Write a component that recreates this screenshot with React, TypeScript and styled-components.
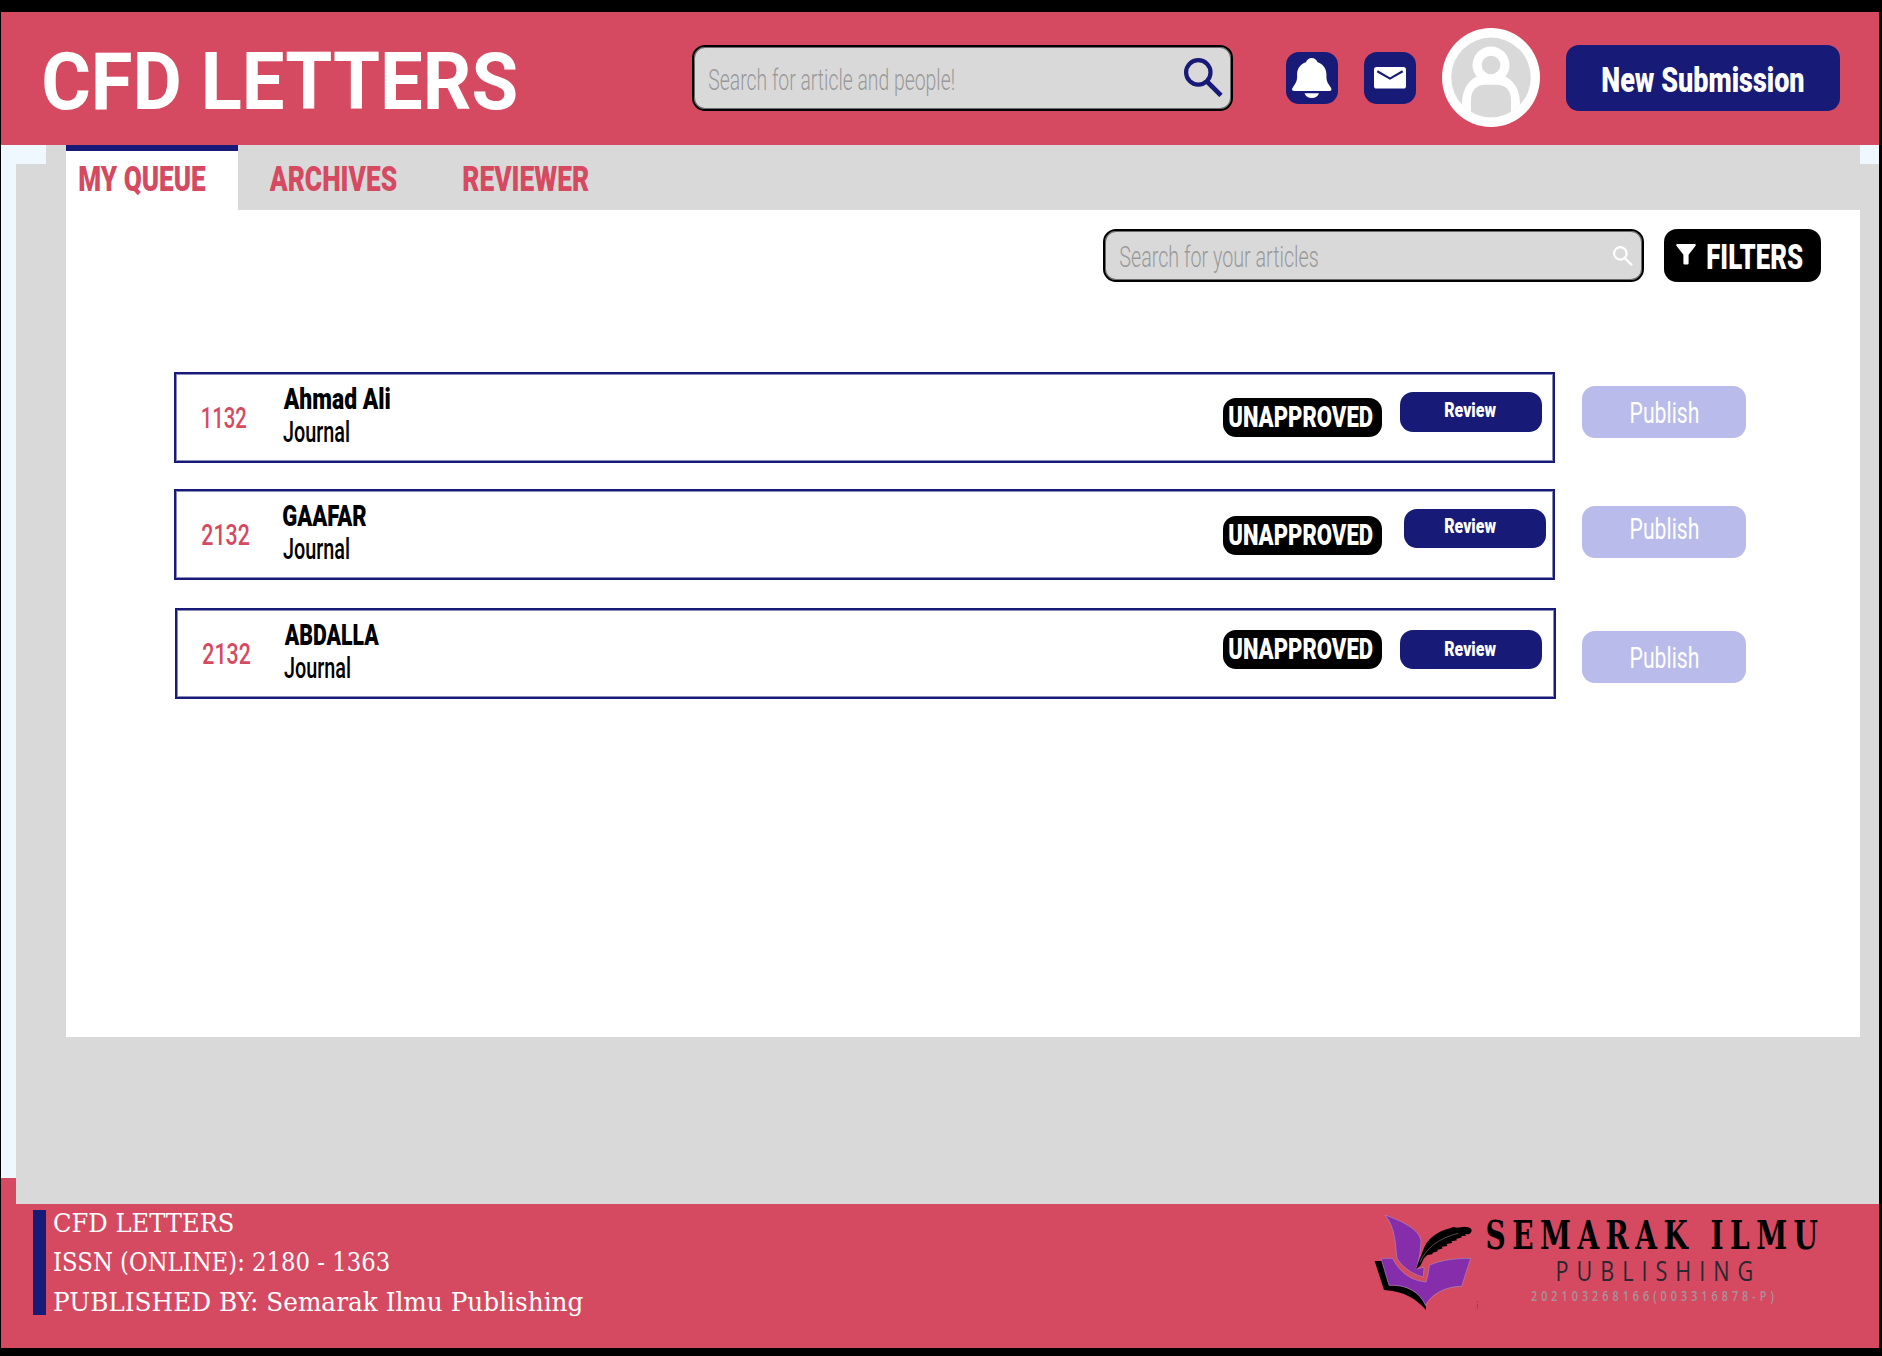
import React, { useLayoutEffect, useState } from "react";
import styled, { createGlobalStyle } from "styled-components";

const pink = "#d54a61";
const navy = "#171a76";
const grey = "#d9d9d9";
const ice = "#f0f8ff";
const lilac = "#b9bbea";
const sans = `Roboto, "Open Sans", "Liberation Sans", sans-serif`;
const slab = `"DejaVu Serif", "Liberation Serif", serif`;
const humanist = `"Open Sans", "Noto Sans", sans-serif`;

const GlobalStyle = createGlobalStyle`
  *, *::before, *::after { box-sizing: border-box; }
  body { margin: 0; background: #000; font-family: ${sans}; }
`;

/* ---------- condensed text ---------- */

type LabelProps = {
  $size: number;
  $weight?: number;
  $color?: string;
  $family?: string;
  $line?: number;
  $spacing?: number;
};

const LabelBox = styled.span<LabelProps & { $width: number }>`
  display: block;
  flex: none;
  width: ${(p) => p.$width}px;
  height: ${(p) => p.$line ?? p.$size}px;
  line-height: ${(p) => p.$line ?? p.$size}px;
  font-family: ${(p) => p.$family ?? sans};
  font-size: ${(p) => p.$size}px;
  font-weight: ${(p) => p.$weight ?? 400};
  letter-spacing: ${(p) => p.$spacing ?? 0}px;
  color: ${(p) => p.$color ?? "#000"};
  white-space: pre;
`;

const LabelInk = styled.span`
  display: inline-block;
  transform-origin: 0 50%;
`;

type FitProps = {
  children: string;
  width: number;
  size: number;
  weight?: number;
  color?: string;
  family?: string;
  line?: number;
  spacing?: number;
  lift?: number;
};

/* Squeezes a label horizontally so that its glyphs span exactly `width`. */
function Fit({ children, width, size, weight = 400, color, family = sans, line, spacing = 0, lift = 0 }: FitProps) {
  const [transform, setTransform] = useState("none");
  useLayoutEffect(() => {
    const ctx = document.createElement("canvas").getContext("2d");
    if (!ctx) return;
    ctx.font = `${weight} ${size}px ${family}`;
    (ctx as any).letterSpacing = `${spacing}px`;
    const m = ctx.measureText(children);
    const scale = width / (m.actualBoundingBoxRight + m.actualBoundingBoxLeft);
    setTransform(`translate(${m.actualBoundingBoxLeft * scale}px, ${-lift}px) scaleX(${scale})`);
  }, [children, width, size, weight, family, spacing, lift]);
  return (
    <LabelBox $width={width} $size={size} $weight={weight} $color={color} $family={family} $line={line} $spacing={spacing}>
      <LabelInk style={{ transform }}>{children}</LabelInk>
    </LabelBox>
  );
}

/* ---------- page frame ---------- */

const Page = styled.div`
  width: 1882px;
  height: 1356px;
  padding: 12px 3px 8px 1px;
  background: #000;
  display: flex;
  flex-direction: column;
  overflow: hidden;
`;

const Header = styled.header`
  flex: none;
  height: 133px;
  padding: 0 39px 2px 43px;
  background: ${pink};
  display: flex;
  align-items: center;
`;

const Brand = styled.h1`
  margin: 8px 176px 0 0;
  font: inherit;
`;

const SearchBox = styled.div<{ $height: number; $padRight: number }>`
  flex: none;
  width: 541px;
  height: ${(p) => p.$height}px;
  padding: 0 ${(p) => p.$padRight}px 0 15px;
  display: flex;
  align-items: center;
  justify-content: space-between;
  background: ${grey};
  border: 2px solid #000;
  border-radius: 13px;
  box-shadow: inset 0 0 0 1px rgba(0, 0, 0, 0.5);
`;

const HeaderTools = styled.div`
  margin-left: 53px;
  display: flex;
  align-items: center;
  gap: 26px;
`;

const IconButton = styled.button`
  width: 52px;
  height: 52px;
  padding: 0;
  border: 0;
  border-radius: 13px;
  background: ${navy};
  display: flex;
  align-items: center;
  justify-content: center;
`;

const SolidButton = styled.button<{ $w: number; $h: number; $bg: string; $top?: number; $left?: number; $padLeft?: number }>`
  flex: none;
  width: ${(p) => p.$w}px;
  height: ${(p) => p.$h}px;
  margin: ${(p) => p.$top ?? 0}px 0 0 ${(p) => p.$left ?? 0}px;
  padding: 0 0 0 ${(p) => p.$padLeft ?? 0}px;
  border: 0;
  border-radius: 13px;
  background: ${(p) => p.$bg};
  display: flex;
  align-items: center;
`;

const Middle = styled.div`
  flex: none;
  height: 1059px;
  display: flex;
`;

const LeftStrip = styled.div`
  width: 15px;
  background: ${pink};
  padding-bottom: 26px;
  &::before {
    content: "";
    display: block;
    height: 100%;
    background: ${ice};
  }
`;

const Body = styled.div`
  flex: 1;
  display: grid;
  grid-template-columns: 30px 20px 1794px 19px;
  background: ${grey};
`;

const Notch = styled.div`
  height: 19px;
  background: ${ice};
`;

const Workspace = styled.main`
  width: 1794px;
`;

const Tabs = styled.nav`
  height: 65px;
  display: flex;
  background: ${grey};
`;

const Tab = styled.a<{ $active?: boolean; $w: number; $pad: number }>`
  width: ${(p) => p.$w}px;
  height: 65px;
  padding: ${(p) => (p.$active ? 11 : 17)}px 0 0 ${(p) => p.$pad}px;
  background: ${(p) => (p.$active ? "#fff" : "transparent")};
  border-top: ${(p) => (p.$active ? `6px solid ${navy}` : "0")};
`;

const Panel = styled.section`
  height: 827px;
  background: #fff;
`;

const Toolbar = styled.div`
  padding: 19px 39px 0 0;
  display: flex;
  justify-content: flex-end;
  gap: 20px;
`;

const FunnelSlot = styled.span`
  display: flex;
  width: 31px;
  padding-bottom: 2px;
`;

const Submissions = styled.ul`
  list-style: none;
  margin: 90px 0 0;
  padding: 0;
`;

const Submission = styled.li<{ $gap: number; $indent: number }>`
  height: 91px;
  margin: ${(p) => p.$gap}px 0 0 ${(p) => p.$indent}px;
  display: flex;
  align-items: flex-start;
`;

const Card = styled.article`
  flex: none;
  width: 1381px;
  height: 91px;
  border: 2px solid ${navy};
  box-shadow: inset 0 0 0 1px rgba(23, 26, 118, 0.5);
  display: flex;
  align-items: flex-start;
`;

const IdSlot = styled.div`
  width: 81px;
  padding-top: 29px;
  margin-left: 26px;
  flex: none;
`;

const Author = styled.div`
  width: 942px;
  flex: none;
  padding-top: 9px;
`;

const Footer = styled.footer`
  flex: none;
  height: 144px;
  padding: 1px 59px 0 32px;
  background: ${pink};
  display: flex;
  align-items: flex-start;
  justify-content: space-between;
`;

const Imprint = styled.div`
  height: 105px;
  margin-top: 5px;
  border-left: 13px solid ${navy};
  padding: 0 0 0 8px;
`;

const Publisher = styled.div`
  display: flex;
`;

const PublisherText = styled.div`
  width: 333px;
  padding-top: 11px;
  display: flex;
  flex-direction: column;
  align-items: flex-start;
`;

const Indent = styled.div<{ $x: number }>`
  margin-left: ${(p) => p.$x}px;
`;

/* ---------- drawings ---------- */

const SearchIcon = ({ size, color, stroke }: { size: number; color: string; stroke: number }) => (
  <svg width={size} height={size} viewBox="0 0 39 39" fill="none" stroke={color} strokeWidth={stroke}>
    <circle cx="14.3" cy="14.4" r="12.2" />
    <path d="M23 23.5L37 37.5" strokeWidth={stroke * 1.1} />
  </svg>
);

const BellIcon = () => (
  <svg width="40" height="40" viewBox="0 0 40 40" fill="#fff">
    <path d="M19.7 0C22.5 0 24.6 1.8 25.6 4.3C31 6 34.2 10.5 34.4 16V19.5C34.6 23.5 36 25.5 38.4 29C40.2 31 39.6 33 37.2 33H2.3C-.2 33-.7 31 1.1 29C3.5 25.5 4.9 23.5 5.1 19.5V16C5.3 10.5 8.5 6 13.9 4.3C14.9 1.8 17 0 19.7 0Z" />
    <path d="M12.5 35.3H27C26 38.2 23.5 40 19.8 40S13.5 38.2 12.5 35.3Z" />
  </svg>
);

const MailIcon = () => (
  <svg width="32" height="22" viewBox="0 0 32 22">
    <rect width="32" height="21.6" rx="2.6" fill="#fff" />
    <path d="M3.3 4.2L16 11.6L28.7 4.2" fill="none" stroke={navy} strokeWidth="2.2" />
  </svg>
);

const Avatar = () => (
  <svg width="98" height="99" viewBox="0 0 98 99">
    <defs>
      <clipPath id="face"><circle cx="49" cy="49.4" r="39.8" /></clipPath>
    </defs>
    <ellipse cx="49" cy="49.5" rx="49" ry="49.5" fill="#fff" />
    <g clipPath="url(#face)">
      <rect width="98" height="99" fill={grey} />
      <path d="M20 99V76C20 60 28 50 38 47.5H60C70 50 78 60 78 76V99Z" fill="#fff" />
      <path d="M29 99V72C29 62 35 56.8 43 56.8H55C63 56.8 69 62 69 72V99Z" fill={grey} />
      <circle cx="49" cy="37" r="18.5" fill="#fff" />
      <circle cx="49" cy="37" r="9.3" fill={grey} />
    </g>
  </svg>
);

const FunnelIcon = () => (
  <svg width="20" height="21" viewBox="0 0 20 21" fill="#fff">
    <path d="M1 0H19Q20.4 .6 19.4 2L12.6 10.8V19.2Q12.6 20.4 11.4 20.4H8.6Q7.4 20.4 7.4 19.2V10.8L.6 2Q-.4 .6 1 0Z" />
  </svg>
);

const BookLogo = () => (
  <svg width="117" height="115" viewBox="0 0 351 345">
    <path d="M14 168H36L60 241C112 238 152 266 168 300V315C140 282 100 258 42 255Z" fill="#000" />
    <g fill="#852daa" stroke="#a88ab8" strokeWidth="2">
      <path d="M45 30C95 48 148 72 153 108C151 135 150 160 138 192L162 187L160 216C122 207 95 182 81 160C75 118 78 70 45 30Z" />
      <path d="M33 160H68C88 204 128 228 168 231C173 215 176 200 178 181C212 165 255 160 302 160L275 244C226 244 182 268 167 302C150 262 112 238 57 241Z" />
    </g>
    <path d="M138 193C145 170 156 145 160 134C172 100 205 78 240 70L250 66L262 68L284 65Q306 66 305 77Q303 86 296 88L284 88L289 92L272 93L277 97L258 102L262 106L244 109L247 114L230 117L232 123L216 125L217 131L202 134L203 139L188 143L187 148L172 150L161 161L151 182Z" fill="#000" />
    <path d="M150 172C168 130 205 100 264 85" fill="none" stroke="#8a7a80" strokeWidth="1.8" />
    <path d="M322 288V292M322 297V311" stroke="#7c3a48" strokeWidth="2" />
  </svg>
);

/* ---------- data ---------- */

const rows = [
  { id: "1132", idW: 44, name: "Ahmad Ali", nameW: 107, gap: 0, indent: 108, badgeTop: 24, badgeShift: -2, revTop: 18, revH: 40, revLeft: 18, revPad: 45, revLift: 2.5, pubTop: 14, pubLift: -2 },
  { id: "2132", idW: 47, name: "GAAFAR", nameW: 83.5, gap: 26, indent: 108, badgeTop: 25, badgeShift: -2, revTop: 17.5, revH: 39, revLeft: 22, revPad: 41, revLift: 2, pubTop: 17, pubLift: 2 },
  { id: "2132", idW: 47, name: "ABDALLA", nameW: 95.5, gap: 28, indent: 109, badgeTop: 20, badgeShift: -3, revTop: 20, revH: 39, revLeft: 18, revPad: 45, revLift: 0, pubTop: 23, pubLift: -2 },
];

export default function App() {
  return (
    <>
      <GlobalStyle />
      <Page>
        <Header>
          <Brand><Fit width={472} size={80} weight={700} color="#fff">CFD LETTERS</Fit></Brand>
          <SearchBox $height={66} $padRight={8}>
            <Fit width={245} size={29.5} weight={300} color="#999" lift={-2.5}>Search for article and people!</Fit>
            <SearchIcon size={39} color={navy} stroke={4.2} />
          </SearchBox>
          <HeaderTools>
            <IconButton><BellIcon /></IconButton>
            <IconButton><MailIcon /></IconButton>
            <Avatar />
            <SolidButton $w={274} $h={66} $bg={navy} $padLeft={35.5}>
              <Fit width={202} size={35} weight={900} color="#fff" lift={-3}>New Submission</Fit>
            </SolidButton>
          </HeaderTools>
        </Header>

        <Middle>
          <LeftStrip />
          <Body>
            <Notch />
            <span />
            <Workspace>
              <Tabs>
                <Tab $active $w={172} $pad={12.5}><Fit width={127} size={35} weight={900} color={pink}>MY QUEUE</Fit></Tab>
                <Tab $w={192} $pad={31}><Fit width={127.5} size={35} weight={900} color={pink}>ARCHIVES</Fit></Tab>
                <Tab $w={192} $pad={32.5}><Fit width={125.5} size={35} weight={900} color={pink}>REVIEWER</Fit></Tab>
              </Tabs>
              <Panel>
                <Toolbar>
                  <SearchBox $height={53} $padRight={9}>
                    <Fit width={198} size={29.5} weight={300} color="#999" lift={-2}>Search for your articles</Fit>
                    <SearchIcon size={20} color="#fff" stroke={4.2} />
                  </SearchBox>
                  <SolidButton $w={157} $h={53} $bg="#000" $padLeft={12}>
                    <FunnelSlot><FunnelIcon /></FunnelSlot>
                    <Fit width={96} size={35.5} weight={900} color="#fff" lift={-1.5}>FILTERS</Fit>
                  </SolidButton>
                </Toolbar>
                <Submissions>
                  {rows.map((r, i) => (
                    <Submission key={i} $gap={r.gap} $indent={r.indent}>
                      <Card>
                        <IdSlot><Fit width={r.idW} size={30} weight={500} color={pink}>{r.id}</Fit></IdSlot>
                        <Author>
                          <Fit width={r.nameW} size={29.5} line={32.5} weight={900}>{r.name}</Fit>
                          <Fit width={66} size={29.5} line={32.5} weight={500}>Journal</Fit>
                        </Author>
                        <SolidButton as="span" $w={159} $h={39} $bg="#000" $top={r.badgeTop} $left={r.badgeShift} $padLeft={6}>
                          <Fit width={144} size={29.5} weight={900} color="#fff">UNAPPROVED</Fit>
                        </SolidButton>
                        <SolidButton $w={142} $h={r.revH} $bg={navy} $top={r.revTop} $left={r.revLeft} $padLeft={r.revPad}>
                          <Fit width={51} size={20.5} weight={900} color="#fff" lift={r.revLift}>Review</Fit>
                        </SolidButton>
                      </Card>
                      <SolidButton $w={164} $h={52} $bg={lilac} $top={r.pubTop} $left={135 - r.indent} $padLeft={49}>
                        <Fit width={67.5} size={29.5} weight={400} color="#fff" lift={r.pubLift}>Publish</Fit>
                      </SolidButton>
                    </Submission>
                  ))}
                </Submissions>
              </Panel>
            </Workspace>
            <Notch />
          </Body>
        </Middle>

        <Footer>
          <Imprint>
            <Fit width={179} size={25.6} line={39.3} family={slab} color="#fff" lift={6.3}>CFD LETTERS</Fit>
            <Fit width={335} size={25.6} line={39.3} family={slab} color="#fff" lift={6.3}>ISSN (ONLINE): 2180 - 1363</Fit>
            <Fit width={529} size={25.6} line={39.3} family={slab} color="#fff" lift={6.3}>PUBLISHED BY: Semarak Ilmu Publishing</Fit>
          </Imprint>
          <Publisher>
            <BookLogo />
            <PublisherText>
              <Fit width={331} size={39} line={38} weight={700} family={slab} spacing={9}>SEMARAK ILMU</Fit>
              <Indent $x={70}>
                <Fit width={195} size={27} line={33} weight={400} family={humanist} spacing={10} color="#2c2730">PUBLISHING</Fit>
              </Indent>
              <Indent $x={44}>
                <Fit width={243} size={15} line={16} weight={600} family={humanist} spacing={5.5} color="#a8929a">202103268166(003316878-P)</Fit>
              </Indent>
            </PublisherText>
          </Publisher>
        </Footer>
      </Page>
    </>
  );
}
